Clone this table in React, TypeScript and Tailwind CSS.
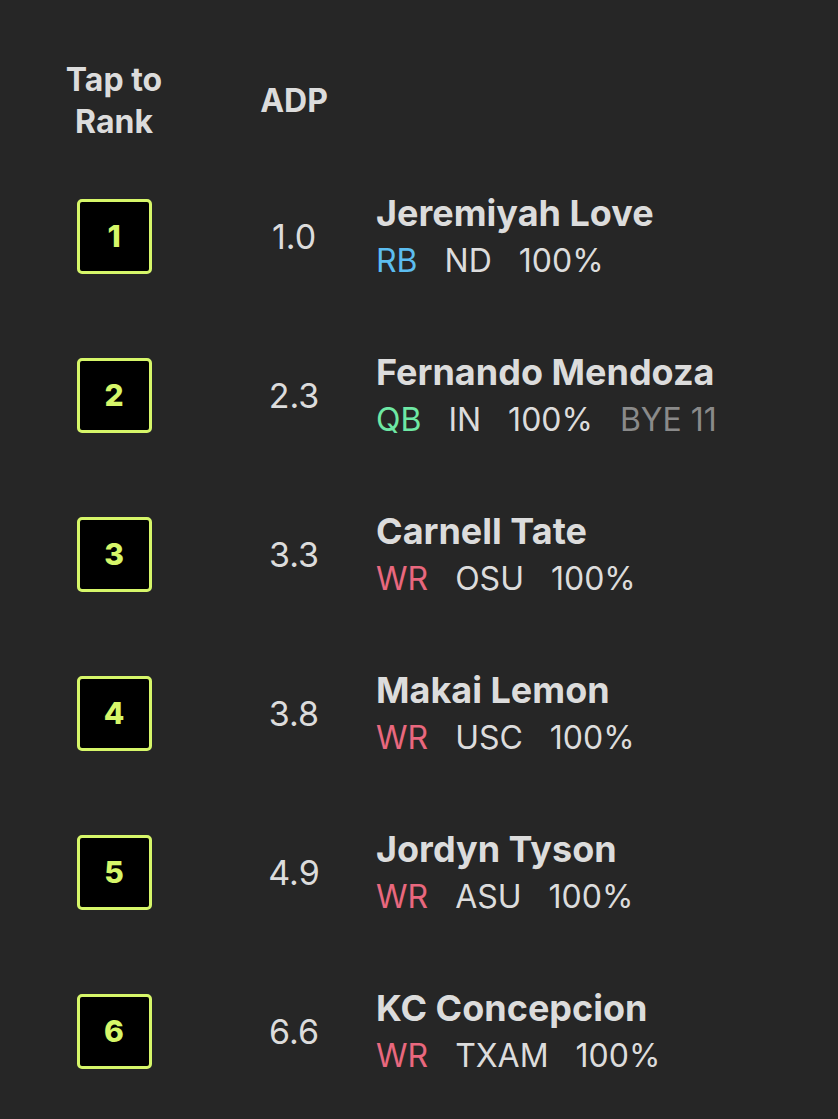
import React from "react";

type Player = {
  rank: number;
  adp: string;
  name: string;
  pos: "RB" | "QB" | "WR";
  team: string;
  pct: string;
  bye?: string;
};

const players: Player[] = [
  { rank: 1, adp: "1.0", name: "Jeremiyah Love", pos: "RB", team: "ND", pct: "100%" },
  { rank: 2, adp: "2.3", name: "Fernando Mendoza", pos: "QB", team: "IN", pct: "100%", bye: "BYE 11" },
  { rank: 3, adp: "3.3", name: "Carnell Tate", pos: "WR", team: "OSU", pct: "100%" },
  { rank: 4, adp: "3.8", name: "Makai Lemon", pos: "WR", team: "USC", pct: "100%" },
  { rank: 5, adp: "4.9", name: "Jordyn Tyson", pos: "WR", team: "ASU", pct: "100%" },
  { rank: 6, adp: "6.6", name: "KC Concepcion", pos: "WR", team: "TXAM", pct: "100%" },
];

const posColor: Record<Player["pos"], string> = {
  RB: "text-[#5cbdf0]",
  QB: "text-[#6ee8a4]",
  WR: "text-[#e9687e]",
};

function PlayerRow({ p }: { p: Player }) {
  return (
    <div className="flex h-[159px] items-center">
      {/* rank box */}
      <div className="flex w-[228px] justify-center">
        <button className="flex h-[75px] w-[75px] items-center justify-center rounded-[5px] border-[3px] border-[#d6f669] bg-black text-[30px] font-extrabold text-[#d6f669]">
          {p.rank}
        </button>
      </div>
      <div className="w-[132px] text-center text-[34px] text-[#dcdcdc]">{p.adp}</div>
      <div className="pl-[16px]">
        <div className="text-[36px] font-bold leading-[47px] text-[#dcdcdc]">{p.name}</div>
        <div className="flex gap-[27px] text-[32px] leading-[47px] text-[#dcdcdc]">
          <span className={posColor[p.pos]}>{p.pos}</span>
          <span>{p.team}</span>
          <span>{p.pct}</span>
          {p.bye && <span className="text-[#8a8a8a]">{p.bye}</span>}
        </div>
      </div>
    </div>
  );
}

export default function App() {
  return (
    <div
      className="min-h-[1119px] w-full bg-[#262626] pt-[59px]"
      style={{ fontFamily: "Inter, 'Open Sans', sans-serif" }}
    >
      {/* header */}
      <div className="flex h-[84px] items-center text-[#dcdcdc]">
        <div className="w-[228px] text-center text-[32px] font-bold leading-[42px]">
          Tap to
          <br />
          Rank
        </div>
        <div className="w-[132px] text-center text-[32px] font-bold">ADP</div>
      </div>
      <div className="mt-[14px]">
        {players.map((p) => (
          <PlayerRow key={p.rank} p={p} />
        ))}
      </div>
    </div>
  );
}
